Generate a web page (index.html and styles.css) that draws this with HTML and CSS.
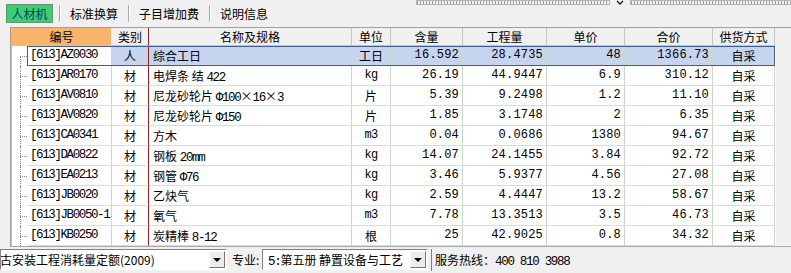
FILE: index.html
```html
<!DOCTYPE html>
<html lang="zh-CN">
<head>
<meta charset="UTF-8">
<title>人材机</title>
<link rel="stylesheet" href="styles.css">
</head>
<body>

<div class="toolbar">
<div class="tabs">
<div class="tab on">人材机</div>
<div class="sep"></div>
<div class="tab">标准换算</div>
<div class="sep"></div>
<div class="tab">子目增加费</div>
<div class="sep"></div>
<div class="tab">说明信息</div>
</div>
<div class="strips">
<div class="strip left"></div>
<svg class="chev" width="20" height="6" viewBox="0 0 20 6"><polyline points="7,1 10,4 13,1" fill="none" stroke="#222" stroke-width="1.4"/></svg>
<div class="strip right"></div>
</div>
</div>

<div class="grid">
<div class="tbl">
<div class="hd">
<div class="hc code-hd">编号</div>
<div class="hc red">类别</div>
<div class="hc">名称及规格</div>
<div class="hc">单位</div>
<div class="hc">含量</div>
<div class="hc">工程量</div>
<div class="hc">单价</div>
<div class="hc">合价</div>
<div class="hc">供货方式</div>
</div>

<div class="row">
<div class="tree first"></div>
<div class="cells sel">
<div class="c code">[613]AZ0030</div><div class="c mid red">人</div><div class="c nm">综合工日</div><div class="c mid">工日</div><div class="c num">16.592</div><div class="c num">28.4735</div><div class="c num">48</div><div class="c num">1366.73</div><div class="c mid">自采</div>
</div>
</div>

<div class="row">
<div class="tree"></div>
<div class="cells">
<div class="c code">[613]AR0170</div><div class="c mid red">材</div><div class="c nm">电焊条 结 <span class="a">422</span></div><div class="c mid u">kg</div><div class="c num">26.19</div><div class="c num">44.9447</div><div class="c num">6.9</div><div class="c num">310.12</div><div class="c mid">自采</div>
</div>
</div>

<div class="row">
<div class="tree"></div>
<div class="cells">
<div class="c code">[613]AV0810</div><div class="c mid red">材</div><div class="c nm">尼龙砂轮片 <span class="a">Φ100</span>×<span class="a">16</span>×<span class="a">3</span></div><div class="c mid">片</div><div class="c num">5.39</div><div class="c num">9.2498</div><div class="c num">1.2</div><div class="c num">11.10</div><div class="c mid">自采</div>
</div>
</div>

<div class="row">
<div class="tree"></div>
<div class="cells">
<div class="c code">[613]AV0820</div><div class="c mid red">材</div><div class="c nm">尼龙砂轮片 <span class="a">Φ150</span></div><div class="c mid">片</div><div class="c num">1.85</div><div class="c num">3.1748</div><div class="c num">2</div><div class="c num">6.35</div><div class="c mid">自采</div>
</div>
</div>

<div class="row">
<div class="tree"></div>
<div class="cells">
<div class="c code">[613]CA0341</div><div class="c mid red">材</div><div class="c nm">方木</div><div class="c mid u">m3</div><div class="c num">0.04</div><div class="c num">0.0686</div><div class="c num">1380</div><div class="c num">94.67</div><div class="c mid">自采</div>
</div>
</div>

<div class="row">
<div class="tree"></div>
<div class="cells">
<div class="c code">[613]DA0822</div><div class="c mid red">材</div><div class="c nm">钢板 <span class="a">20mm</span></div><div class="c mid u">kg</div><div class="c num">14.07</div><div class="c num">24.1455</div><div class="c num">3.84</div><div class="c num">92.72</div><div class="c mid">自采</div>
</div>
</div>

<div class="row">
<div class="tree"></div>
<div class="cells">
<div class="c code">[613]EA0213</div><div class="c mid red">材</div><div class="c nm">钢管 <span class="a">Φ76</span></div><div class="c mid u">kg</div><div class="c num">3.46</div><div class="c num">5.9377</div><div class="c num">4.56</div><div class="c num">27.08</div><div class="c mid">自采</div>
</div>
</div>

<div class="row">
<div class="tree"></div>
<div class="cells">
<div class="c code">[613]JB0020</div><div class="c mid red">材</div><div class="c nm">乙炔气</div><div class="c mid u">kg</div><div class="c num">2.59</div><div class="c num">4.4447</div><div class="c num">13.2</div><div class="c num">58.67</div><div class="c mid">自采</div>
</div>
</div>

<div class="row">
<div class="tree"></div>
<div class="cells">
<div class="c code">[613]JB0050-1</div><div class="c mid red">材</div><div class="c nm">氧气</div><div class="c mid u">m3</div><div class="c num">7.78</div><div class="c num">13.3513</div><div class="c num">3.5</div><div class="c num">46.73</div><div class="c mid">自采</div>
</div>
</div>

<div class="row">
<div class="tree"></div>
<div class="cells">
<div class="c code">[613]KB0250</div><div class="c mid red">材</div><div class="c nm">炭精棒 <span class="a">8-12</span></div><div class="c mid">根</div><div class="c num">25</div><div class="c num">42.9025</div><div class="c num">0.8</div><div class="c num">34.32</div><div class="c mid">自采</div>
</div>
</div>
</div>
</div>

<div class="status">
<div class="combo c1">
<div class="txt">古安装工程消耗量定额(2009)</div>
<div class="ddb"><i></i></div>
</div>
<div class="lbl">专业:</div>
<div class="combo c2">
<div class="txt"><span class="a">5:</span>第五册 静置设备与工艺</div>
<div class="ddb"><i></i></div>
</div>
<div class="panel">服务热线：<span class="a">400 810 3988</span></div>
</div>

</body>
</html>
```

FILE: styles.css
```css
/* ---------- GLOBAL ---------- */
*{margin:0;padding:0;box-sizing:border-box;}
body{
width:791px;height:273px;overflow:hidden;
background:#f0f0f0;color:#000;
font-family:"Noto Sans CJK SC",sans-serif;font-size:12px;
}
.a{font-family:"Liberation Mono",monospace;font-size:12.5px;letter-spacing:-1.3px;}

/* ---------- TOOLBAR ---------- */
.toolbar{display:flex;align-items:flex-start;height:27px;}
.tabs{display:flex;align-items:center;height:19px;margin-top:4px;}
.tab{padding:0 10px;line-height:19px;white-space:nowrap;}
.tab.on{
width:47px;margin:0 6px 0 6px;padding:0;text-align:center;
background:#36d06e;border:1px solid #6b8f76;color:#15307a;line-height:17px;
}
.sep{width:1px;height:17px;background:#a9a9a9;box-shadow:1px 0 #fff;}

.strips{display:flex;align-items:flex-start;margin-left:auto;width:375px;}
.strip{
height:5px;border:1px solid #b4b4b4;
background:repeating-linear-gradient(90deg,#9a9a9a 0 1px,#f4f4f4 1px 3px);
}
.strip.left{width:194px;}
.strip.right{flex:1;}
.chev{display:block;}

/* ---------- GRID ---------- */
.grid{
height:220px;margin-left:10px;
border-left:1px solid #9c9c9c;border-top:1px solid #a0a0a0;border-bottom:1px solid #a8a8a8;
}
.tbl{border-left:1px solid #c4c4c4;width:765px;background:#fff;}

.hd{
display:grid;height:18px;background:#f0f0f0;
grid-template-columns:100px 37px 203px 39px 72px 84px 78px 88px 62px;
}
.hc{text-align:center;line-height:17px;border-right:1px solid #c6c6c6;border-bottom:1px solid #c4c4c4;white-space:nowrap;}
.hc.code-hd{background:#f9b46b;border-right-color:#f0f0f0;}
.hc.red,.c.red{border-right-color:#9c1c1c;}

.row{display:flex;height:20px;}
.tree{width:15px;position:relative;}
.tree::before{
content:"";position:absolute;left:8px;top:0;bottom:0;border-left:1px dotted #8a8a8a;
}
.tree.first::before{top:10px;}
.tree::after{
content:"";position:absolute;left:8px;right:0;top:10px;border-top:1px dotted #8a8a8a;
}
.cells{
display:grid;width:748px;
grid-template-columns:85px 37px 203px 39px 72px 84px 78px 88px 62px;
}
.c{
line-height:19px;white-space:nowrap;overflow:hidden;background:#fff;
border-right:1px solid #c7d9c7;border-bottom:1px solid #d3e2d3;
}
.cells.sel{outline:1px solid #3d5d9b;outline-offset:-1px;}
.cells.sel .c{background:#c6d4ee;}
.cells.sel .c.code{background:#fff;}
.code{padding-left:3px;font-family:"Liberation Mono",monospace;font-size:12.5px;letter-spacing:-1.4px;}
.mid{text-align:center;}
.u{font-family:"Liberation Mono",monospace;font-size:12px;letter-spacing:-0.8px;}
.nm{padding-left:4px;}
.num{text-align:right;padding-right:3px;font-family:"Liberation Mono",monospace;font-size:12px;letter-spacing:0.2px;}

/* ---------- STATUS BAR ---------- */
.status{display:flex;align-items:flex-start;height:26px;padding-top:2px;}
.combo{
display:flex;height:21px;background:#fff;
border:1px solid;border-color:#828282 #fff #fff #828282;
}
.combo .txt{flex:1;overflow:hidden;white-space:nowrap;line-height:19px;}
.c1{width:227px;}
.c1 .txt{text-indent:-1px;}
.c2{width:166px;}
.c2 .txt{padding-left:5px;}
.ddb{
width:16px;height:17px;margin:1px;
display:flex;align-items:center;justify-content:center;
background:#ececec;border:1px solid;border-color:#fff #777 #777 #fff;
}
.ddb i{width:0;height:0;border-left:4px solid transparent;border-right:4px solid transparent;border-top:4px solid #000;}
.lbl{margin-left:5px;width:30px;line-height:21px;}
.panel{margin-left:3px;padding-left:3px;height:22px;line-height:21px;border-left:1px solid #808080;white-space:nowrap;}
```
